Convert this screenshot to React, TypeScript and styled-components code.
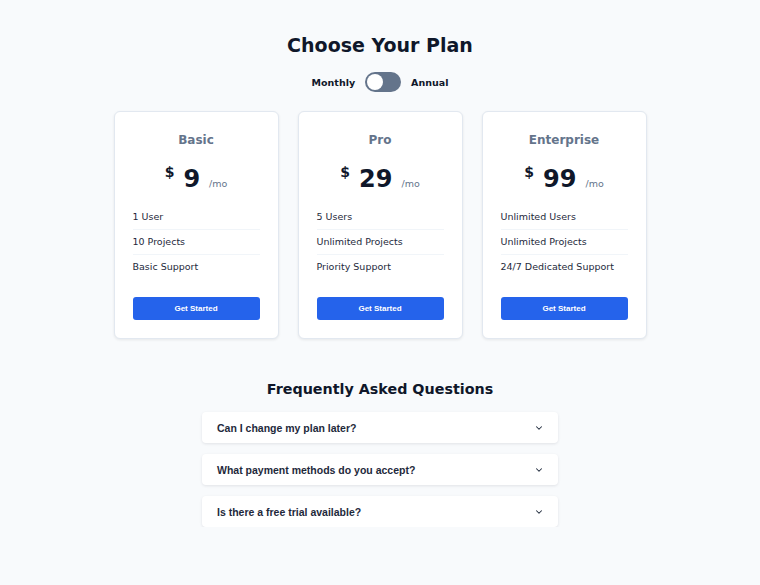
import React, { useState } from "react";
import styled, { createGlobalStyle } from "styled-components";

const GlobalStyle = createGlobalStyle`
  body {
    margin: 0;
    background: #f8fafc;
    font-family: "DejaVu Sans", sans-serif;
    color: #0f172a;
  }
`;

const Page = styled.div`
  display: flex;
  flex-direction: column;
  align-items: center;
  padding-top: 34px;
`;

const Title = styled.h1`
  margin: 0;
  font-size: 19px;
  font-weight: 700;
  color: #0f172a;
`;

const ToggleRow = styled.div`
  display: flex;
  align-items: center;
  gap: 10px;
  margin-top: 16px;
  font-size: 9.5px;
  font-weight: 700;
  color: #0f172a;
`;

const Switch = styled.button<{ on: boolean }>`
  position: relative;
  width: 36px;
  height: 20px;
  border: none;
  border-radius: 10px;
  background: #64748b;
  padding: 0;
  cursor: pointer;

  &::after {
    content: "";
    position: absolute;
    top: 2px;
    left: ${({ on }) => (on ? "18px" : "2px")};
    width: 16px;
    height: 16px;
    border-radius: 50%;
    background: #fff;
  }
`;

const Cards = styled.div`
  display: grid;
  grid-template-columns: repeat(3, 165px);
  gap: 19px;
  margin-top: 19px;
`;

const Card = styled.div`
  background: #fff;
  border: 1px solid #e2e8f0;
  border-radius: 6px;
  box-shadow: 0 1px 3px rgba(0, 0, 0, 0.08);
  padding: 21px 18px 18px;
  display: flex;
  flex-direction: column;
`;

const PlanName = styled.h3`
  margin: 0;
  text-align: center;
  font-size: 12px;
  font-weight: 700;
  color: #64748b;
`;

const Price = styled.div`
  display: flex;
  justify-content: center;
  align-items: baseline;
  margin-top: 16px;
  color: #0f172a;
`;

const Currency = styled.span`
  font-size: 14px;
  font-weight: 700;
  align-self: flex-start;
  margin-top: 1px;
  margin-right: 9px;
`;

const Amount = styled.span`
  font-size: 24px;
  font-weight: 700;
  line-height: 32px;
`;

const Period = styled.span`
  font-size: 9.5px;
  color: #64748b;
  margin-left: 9px;
`;

const Features = styled.ul`
  list-style: none;
  margin: 10px 0 0;
  padding: 0;
`;

const Feature = styled.li`
  font-size: 9.5px;
  color: #1e293b;
  padding: 6px 0;
  line-height: 12px;
  border-bottom: 1px solid #f1f5f9;

  &:last-child {
    border-bottom: none;
  }
`;

const CtaButton = styled.button`
  margin-top: 18px;
  height: 23px;
  border: none;
  border-radius: 3px;
  background: #2563eb;
  color: #fff;
  font-family: "Liberation Sans", Arial, sans-serif;
  font-size: 8px;
  font-weight: 700;
  cursor: pointer;
`;

const FaqTitle = styled.h2`
  margin: 42px 0 0;
  font-size: 14.3px;
  font-weight: 700;
  color: #0f172a;
`;

const FaqList = styled.div`
  display: flex;
  flex-direction: column;
  gap: 11px;
  width: 356px;
  margin-top: 15px;
`;

const FaqItem = styled.button`
  display: flex;
  align-items: center;
  justify-content: space-between;
  height: 31px;
  padding: 0 14px 0 15px;
  background: #fff;
  border: none;
  border-radius: 4px;
  box-shadow: 0 1px 3px rgba(15, 23, 42, 0.1);
  font-family: "Liberation Sans", Arial, sans-serif;
  font-size: 10.5px;
  font-weight: 700;
  color: #1e293b;
  text-align: left;
  cursor: pointer;
`;

const plans = [
  { name: "Basic", price: 9, features: ["1 User", "10 Projects", "Basic Support"] },
  { name: "Pro", price: 29, features: ["5 Users", "Unlimited Projects", "Priority Support"] },
  {
    name: "Enterprise",
    price: 99,
    features: ["Unlimited Users", "Unlimited Projects", "24/7 Dedicated Support"],
  },
];

const faqs = [
  "Can I change my plan later?",
  "What payment methods do you accept?",
  "Is there a free trial available?",
];

const Chevron = () => (
  <svg width="10" height="10" viewBox="0 0 24 24" fill="none" stroke="#1e293b" strokeWidth="2.5" strokeLinecap="round" strokeLinejoin="round">
    <path d="m6 9 6 6 6-6" />
  </svg>
);

export default function App() {
  const [annual, setAnnual] = useState(false);

  return (
    <Page>
      <GlobalStyle />
      <Title>Choose Your Plan</Title>
      <ToggleRow>
        <span>Monthly</span>
        <Switch on={annual} onClick={() => setAnnual(!annual)} />
        <span>Annual</span>
      </ToggleRow>
      <Cards>
        {plans.map((plan) => (
          <Card key={plan.name}>
            <PlanName>{plan.name}</PlanName>
            <Price>
              <Currency>$</Currency>
              <Amount>{plan.price}</Amount>
              <Period>/mo</Period>
            </Price>
            <Features>
              {plan.features.map((f) => (
                <Feature key={f}>{f}</Feature>
              ))}
            </Features>
            <CtaButton>Get Started</CtaButton>
          </Card>
        ))}
      </Cards>
      <FaqTitle>Frequently Asked Questions</FaqTitle>
      <FaqList>
        {faqs.map((q) => (
          <FaqItem key={q}>
            {q}
            <Chevron />
          </FaqItem>
        ))}
      </FaqList>
    </Page>
  );
}
